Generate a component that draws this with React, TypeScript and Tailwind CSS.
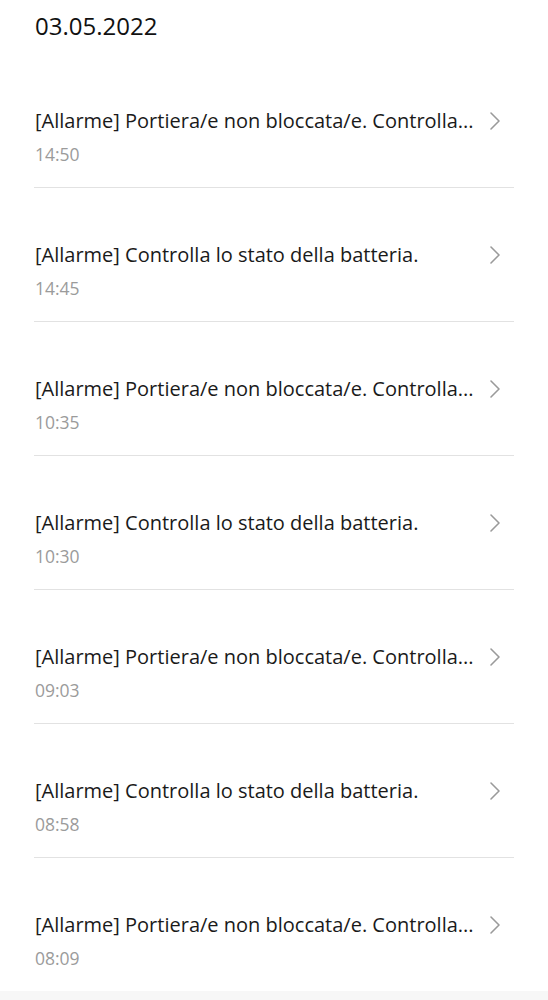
const items = [
  { title: "[Allarme] Portiera/e non bloccata/e. Controlla...", time: "14:50" },
  { title: "[Allarme] Controlla lo stato della batteria.", time: "14:45" },
  { title: "[Allarme] Portiera/e non bloccata/e. Controlla...", time: "10:35" },
  { title: "[Allarme] Controlla lo stato della batteria.", time: "10:30" },
  { title: "[Allarme] Portiera/e non bloccata/e. Controlla...", time: "09:03" },
  { title: "[Allarme] Controlla lo stato della batteria.", time: "08:58" },
  { title: "[Allarme] Portiera/e non bloccata/e. Controlla...", time: "08:09" },
];

const Chevron = () => (
  <svg width="12" height="20" viewBox="0 0 12 20" fill="none" className="shrink-0">
    <polyline points="2,2 10,10 2,18" stroke="#9a9a9a" strokeWidth="1.6" strokeLinecap="round" strokeLinejoin="round" />
  </svg>
);

export default function App() {
  return (
    <div className="min-h-[1000px] bg-[#f7f7f7] font-['Open_Sans',sans-serif]">
      <div className="bg-white">
        <div className="h-[54px] px-[35px] pt-[10px]">
          <h1 className="text-[24px] leading-[32px] text-[#111]">03.05.2022</h1>
        </div>
        {items.map((item, i) => (
          <div
            key={i}
            className={
              "mx-[34px] flex items-start pt-[54px] pb-[23px] " +
              (i < items.length - 1 ? "border-b border-[#e2e2e2]" : "")
            }
          >
            <div className="min-w-0 flex-1 pl-[1px]">
              <p className="whitespace-nowrap text-[20px] leading-[26px] text-[#1a1a1a]">
                {item.title}
              </p>
              <p className="mt-[10px] text-[17.5px] leading-[20px] text-[#9b9b9b]">{item.time}</p>
            </div>
            <div className="ml-[8px] mr-[13px] mt-[3px]">
              <Chevron />
            </div>
          </div>
        ))}
      </div>
    </div>
  );
}
